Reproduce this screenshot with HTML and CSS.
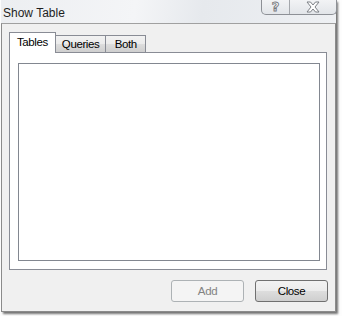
FILE: index.html
```html
<!DOCTYPE html>
<html lang="en">
<head>
<meta charset="UTF-8">
<meta name="viewport" content="width=device-width, initial-scale=1.0">
<title>Show Table</title>
<link rel="stylesheet" href="styles.css">
</head>
<body>

<div class="window">
  <!-- Barra de titulo -->
  <div class="titlebar">
    <span class="title">Show Table</span>
    <div class="caption-buttons">
      <div class="cap-btn help-btn"><span class="help-glyph">?</span></div>
      <div class="cap-btn close-btn">
        <svg width="14" height="12" viewBox="0 0 14 12">
          <polygon points="1,1 4.5,1 7,4 9.5,1 13,1 9,6 13,11 9.5,11 7,8 4.5,11 1,11 5,6"
                   fill="#fdfdfd" stroke="#7d8086" stroke-width="1" stroke-linejoin="round"/>
        </svg>
      </div>
    </div>
  </div>

  <!-- Area cliente -->
  <div class="client">
    <div class="tabs">
      <div class="tab active">Tables</div>
      <div class="tab">Queries</div>
      <div class="tab">Both</div>
    </div>
    <div class="tab-panel">
      <div class="list-box"></div>
    </div>
    <div class="buttons-row">
      <button class="btn" disabled>Add</button>
      <button class="btn">Close</button>
    </div>
  </div>
</div>

</body>
</html>
```

FILE: styles.css
```css
* {
  box-sizing: border-box;
}

body {
  margin: 0;
  background: #fdfdfd;
  width: 342px;
  height: 316px;
  overflow: hidden;
  font-family: 'Liberation Sans', Arial, sans-serif;
}

.window {
  width: 335px;
  margin-left: 1px;
  box-shadow: 2px 2px 2px rgba(0, 0, 0, 0.55);
}

/* Barra de titulo */
.titlebar {
  height: 23px;
  display: flex;
  justify-content: space-between;
  align-items: flex-start;
  background: linear-gradient(100deg, #eceef1 0%, #f4f5f7 40%, #e6e9ed 60%, #eef0f3 100%);
}

.title {
  font-size: 12px;
  color: #1e1e1e;
  padding: 6px 0 0 2px;
}

.caption-buttons {
  display: flex;
  margin-right: -1px;
  border: 1px solid #8d9096;
  border-top: none;
  border-radius: 0 0 5px 5px;
  background: linear-gradient(#f2f3f5, #e2e5e9);
  height: 15px;
}

.cap-btn {
  display: flex;
  justify-content: center;
  align-items: center;
}

.help-btn {
  width: 28px;
  border-right: 1px solid #a4a7ac;
}

.help-glyph {
  font-family: 'DejaVu Sans', sans-serif;
  font-weight: bold;
  font-size: 13px;
  color: #fdfdfd;
  -webkit-text-stroke: 0.9px #777a80;
  margin-top: -2px;
}

.close-btn {
  width: 46px;
}

/* Area cliente */
.client {
  height: 289px;
  background: #f0f0f0;
  border: 1px solid #8b8b8b;
  border-top-color: #a0a0a0;
  padding: 8px 7px 0 7px;
}

.tabs {
  display: flex;
  align-items: flex-end;
  height: 20px;
  position: relative;
  z-index: 1;
}

.tab {
  font-size: 11.5px;
  letter-spacing: -0.4px;
  color: #000;
  min-width: 40px;
  text-align: center;
  height: 17px;
  line-height: 16px;
  padding: 0 6px;
  border: 1px solid #898c95;
  border-bottom: none;
  border-left: none;
  background: linear-gradient(#f2f2f2 0%, #ebebeb 50%, #dddddd 51%, #cfcfcf 100%);
}

.tab.active {
  height: 21px;
  line-height: 18px;
  padding: 0 7px;
  border-left: 1px solid #898c95;
  background: #fff;
  margin-bottom: -1px;
}

.tab-panel {
  width: 318px;
  height: 218px;
  background: #fff;
  border: 1px solid #898c95;
  padding: 10px 6px 8px 8px;
}

.list-box {
  width: 302px;
  height: 198px;
  border: 1px solid #828790;
  background: #fff;
}

/* Botones */
.buttons-row {
  display: flex;
  justify-content: flex-end;
  gap: 11px;
  margin-top: 10px;
}

.btn {
  width: 73px;
  height: 22px;
  font-family: 'Liberation Sans', Arial, sans-serif;
  font-size: 11.5px;
  letter-spacing: -0.4px;
  color: #000;
  border: 1px solid #707070;
  border-radius: 3px;
  background: linear-gradient(#f2f2f2 0%, #ebebeb 50%, #dddddd 51%, #cfcfcf 100%);
  padding: 0;
}

.btn:disabled {
  color: #838383;
  border-color: #adb2b5;
  background: #f4f4f4;
}
```
